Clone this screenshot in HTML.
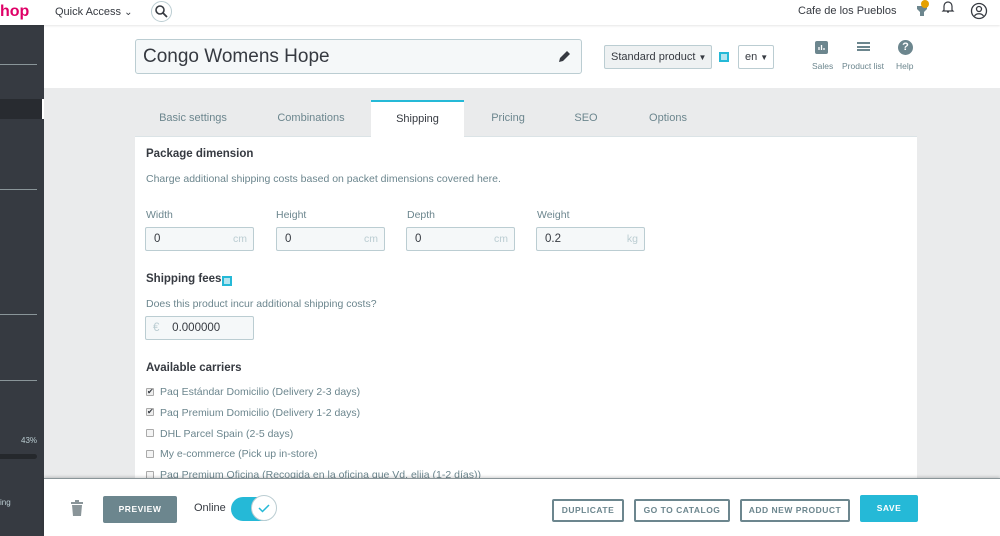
<!DOCTYPE html>
<html><head><meta charset="utf-8"><style>
*{box-sizing:border-box;margin:0;padding:0}
body{width:1000px;height:536px;overflow:hidden;position:relative;background:#fff;font-family:"Liberation Sans",sans-serif;color:#363a41;font-size:12px}
.abs{position:absolute}
.top{left:0;top:0;width:1000px;height:25px;background:#fff;box-shadow:0 1px 2px rgba(0,0,0,.1);z-index:3}
.side{left:0;top:25px;width:44px;height:511px;background:#363a41}
.side .ln{position:absolute;left:0;width:37px;height:1px;background:#8a9599}
.gray{left:44px;top:88px;width:956px;height:390px;background:#eaebec}
.panel{left:135px;top:137px;width:782px;height:341px;background:#fff}
.tab{top:100px;height:37px;line-height:37px;text-align:center;color:#6c868e;font-size:11px}
.inp{height:24px;border:1px solid #bbcdd2;border-radius:2px;background:#f5f8f9;font-size:11.5px;line-height:22px;padding-left:8px;color:#363a41}
.unit{position:absolute;right:6px;top:0;color:#bbcdd2;font-size:10.5px}
.lbl{color:#6c868e;font-size:10.5px}
h4{font-size:11.5px;font-weight:bold;color:#363a41}
.cb{left:146px;width:8px;height:8px;border:1px solid #aaa;background:#f4f4f4;border-radius:1px}
.ct{left:160px;color:#6c868e;font-size:10.5px}
.btn{top:499px;height:23px;border:2px solid #6c868e;border-radius:2px;font-size:8.5px;font-weight:bold;color:#6c868e;text-align:center;line-height:19px;letter-spacing:.5px}
</style></head><body>
<div class="abs top">
<div class="abs" style="left:0;top:3px;color:#df0067;font-size:16px;font-weight:bold">hop</div>
<div class="abs" style="left:55px;top:6px;font-size:11px;color:#363a41">Quick Access <span style="font-size:10px">&#8964;</span></div>
<div class="abs" style="left:151px;top:1px;width:21px;height:21px;border:1px solid #bbcdd2;border-radius:50%"><svg width="19" height="19" viewBox="0 0 19 19"><circle cx="8" cy="8" r="4" fill="none" stroke="#363a41" stroke-width="1.6"/><path d="M11 11l4 4" stroke="#363a41" stroke-width="1.8"/></svg></div>
<div class="abs" style="left:798px;top:5px;font-size:11px">Cafe de los Pueblos</div>
<svg class="abs" style="left:914px;top:0" width="16" height="18"><path d="M3 6h10v3l-3 3v4H6v-4L3 9z" fill="#6c868e"/><circle cx="11" cy="4" r="4" fill="#e5a000"/></svg>
<svg class="abs" style="left:941px;top:0" width="14" height="14"><path d="M3 10V6a4 4 0 018 0v4l1 1H2zM6 12h2" fill="none" stroke="#363a41" stroke-width="1.2"/></svg>
<svg class="abs" style="left:970px;top:2px" width="18" height="18"><circle cx="9" cy="9" r="7.5" fill="none" stroke="#363a41" stroke-width="1.3"/><circle cx="9" cy="7" r="2.5" fill="none" stroke="#363a41" stroke-width="1.3"/><path d="M4.5 14a5 4 0 019 0" fill="none" stroke="#363a41" stroke-width="1.3"/></svg>
</div>
<div class="abs side">
<div class="ln" style="top:39px"></div>
<div style="position:absolute;left:0;top:74px;width:44px;height:20px;background:#282b30;border-right:2px solid #fff"></div>
<div class="ln" style="top:164px"></div>
<div class="ln" style="top:289px"></div>
<div class="ln" style="top:355px"></div>
<div style="position:absolute;left:21px;top:411px;color:#bbcdd2;font-size:8px">43%</div>
<div style="position:absolute;left:0;top:429px;width:37px;height:5px;background:#25282c;border-radius:0 3px 3px 0"></div>
<div style="position:absolute;left:0;top:473px;color:#bbcdd2;font-size:8px">ing</div>
</div>
<div class="abs" style="left:135px;top:39px;width:447px;height:35px;border:1px solid #bbcdd2;border-radius:3px;background:#f5f8f9;font-size:19px;line-height:33px;padding-left:7px;color:#363a41">Congo Womens Hope
<svg style="position:absolute;right:9px;top:9px" width="15" height="15"><path d="M2 13l1-4 7-7 3 3-7 7z" fill="#363a41"/></svg></div>
<div class="abs" style="left:604px;top:45px;width:108px;height:24px;border:1px solid #bbcdd2;border-radius:2px;background:#eef1f2;font-size:11px;line-height:22px;padding-left:6px">Standard product <span style="font-size:8px">&#9660;</span></div>
<div class="abs" style="left:719px;top:52px;width:10px;height:10px;border:2px solid #25b9d7;background:#b4e5f0"></div>
<div class="abs" style="left:738px;top:45px;width:36px;height:24px;border:1px solid #bbcdd2;border-radius:2px;font-size:11px;line-height:22px;padding-left:6px">en <span style="font-size:8px">&#9660;</span></div>
<svg class="abs" style="left:815px;top:41px" width="13" height="13"><rect width="13" height="13" rx="2" fill="#6c868e"/><path d="M4 9V6M6.5 9V4M9 9V7" stroke="#fff" stroke-width="1.3"/></svg>
<div class="abs" style="left:857px;top:42px;width:13px;height:9px;border-top:2px solid #6c868e;border-bottom:2px solid #6c868e"><div style="margin-top:1.5px;height:2px;background:#6c868e"></div></div>
<div class="abs" style="left:898px;top:40px;width:15px;height:15px;border-radius:50%;background:#6c868e;color:#fff;font-size:11px;font-weight:bold;text-align:center;line-height:15px">?</div>
<div class="abs lbl" style="left:812px;top:61px;font-size:8.5px">Sales</div>
<div class="abs lbl" style="left:842px;top:61px;font-size:8.5px">Product list</div>
<div class="abs lbl" style="left:896px;top:61px;font-size:8.5px">Help</div>
<div class="abs gray"></div>
<div class="abs" style="left:135px;top:136px;width:782px;height:1px;background:#dbe3e6"></div>
<div class="abs tab" style="left:135px;width:116px">Basic settings</div>
<div class="abs tab" style="left:251px;width:120px">Combinations</div>
<div class="abs tab" style="left:371px;width:93px;background:#fff;border-top:2px solid #25b9d7;color:#363a41;line-height:35px">Shipping</div>
<div class="abs tab" style="left:464px;width:88px">Pricing</div>
<div class="abs tab" style="left:552px;width:68px">SEO</div>
<div class="abs tab" style="left:620px;width:96px">Options</div>
<div class="abs panel"></div>
<h4 class="abs" style="left:146px;top:148px">Package dimension</h4>
<div class="abs lbl" style="left:146px;top:173px">Charge additional shipping costs based on packet dimensions covered here.</div>
<div class="abs lbl" style="left:146px;top:209px">Width</div>
<div class="abs lbl" style="left:276px;top:209px">Height</div>
<div class="abs lbl" style="left:407px;top:209px">Depth</div>
<div class="abs lbl" style="left:537px;top:209px">Weight</div>
<div class="abs inp" style="left:145px;top:227px;width:109px">0<span class="unit">cm</span></div>
<div class="abs inp" style="left:276px;top:227px;width:109px">0<span class="unit">cm</span></div>
<div class="abs inp" style="left:406px;top:227px;width:109px">0<span class="unit">cm</span></div>
<div class="abs inp" style="left:536px;top:227px;width:109px">0.2<span class="unit">kg</span></div>
<h4 class="abs" style="left:146px;top:273px">Shipping fees</h4>
<div class="abs" style="left:222px;top:276px;width:10px;height:10px;border:2px solid #25b9d7;background:#b4e5f0"></div>
<div class="abs lbl" style="left:146px;top:298px">Does this product incur additional shipping costs?</div>
<div class="abs inp" style="left:145px;top:316px;width:109px;padding-left:7px"><span style="color:#bbcdd2">€</span>&nbsp;&nbsp;&nbsp;&nbsp;0.000000</div>
<h4 class="abs" style="left:146px;top:362px">Available carriers</h4>
<div class="abs cb" style="top:388px;background:#eee;font-size:8px;line-height:6px;color:#363a41">✔</div><div class="abs ct" style="top:386px">Paq Estándar Domicilio (Delivery 2-3 days)</div>
<div class="abs cb" style="top:408px;background:#eee;font-size:8px;line-height:6px;color:#363a41">✔</div><div class="abs ct" style="top:407px">Paq Premium Domicilio (Delivery 1-2 days)</div>
<div class="abs cb" style="top:429px"></div><div class="abs ct" style="top:428px">DHL Parcel Spain (2-5 days)</div>
<div class="abs cb" style="top:450px"></div><div class="abs ct" style="top:448px">My e-commerce (Pick up in-store)</div>
<div class="abs cb" style="top:471px"></div><div class="abs ct" style="top:469px">Paq Premium Oficina (Recogida en la oficina que Vd. elija (1-2 días))</div>
<div class="abs" style="left:44px;top:478px;width:956px;height:58px;background:#fff;border-top:1px solid #8a9599;box-shadow:0 -1px 3px rgba(0,0,0,.2)"></div>
<svg class="abs" style="left:71px;top:500px" width="12" height="16"><rect x="0" y="2" width="12" height="2" fill="#8a9599"/><rect x="4" y="0" width="4" height="2" fill="#8a9599"/><path d="M1 5h10l-1 11H2z" fill="#8a9599"/></svg>
<div class="abs" style="left:103px;top:496px;width:74px;height:27px;background:#6c868e;border-radius:2px;color:#fff;font-size:8.5px;font-weight:bold;text-align:center;line-height:27px;letter-spacing:.5px">PREVIEW</div>
<div class="abs" style="left:194px;top:502px;font-size:11px;color:#363a41">Online</div>
<div class="abs" style="left:231px;top:497px;width:45px;height:24px;border-radius:12px;background:#25b9d7"></div>
<div class="abs" style="left:251px;top:495px;width:26px;height:26px;border-radius:50%;background:#fff;border:1px solid #bbcdd2"><svg width="24" height="24"><path d="M7 12l3.5 3.5L17 9" fill="none" stroke="#25b9d7" stroke-width="1.5"/></svg></div>
<div class="abs btn" style="left:552px;width:72px">DUPLICATE</div>
<div class="abs btn" style="left:634px;width:96px">GO TO CATALOG</div>
<div class="abs btn" style="left:740px;width:110px">ADD NEW PRODUCT</div>
<div class="abs" style="left:860px;top:495px;width:58px;height:27px;background:#25b9d7;border-radius:2px;color:#fff;font-size:8.5px;font-weight:bold;text-align:center;line-height:27px;letter-spacing:.5px">SAVE</div>
</body></html>
